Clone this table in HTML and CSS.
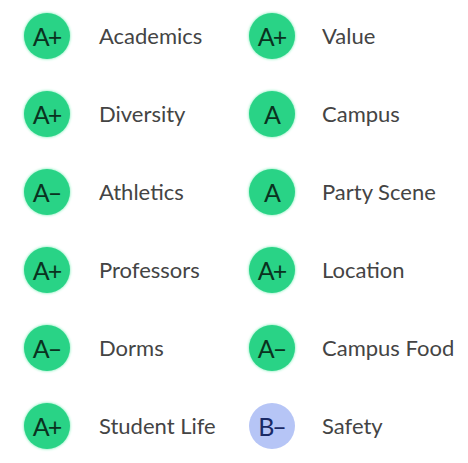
FILE: index.html
```html
<!DOCTYPE html>
<html>
<head>
<meta charset="utf-8">
<link rel="stylesheet" href="styles.css">
</head>
<body>
<div class="grades">
  <div class="item"><div class="grade green">A+</div><div class="label">Academics</div></div>
  <div class="item"><div class="grade green">A+</div><div class="label">Value</div></div>
  <div class="item"><div class="grade green">A+</div><div class="label">Diversity</div></div>
  <div class="item"><div class="grade green">A</div><div class="label">Campus</div></div>
  <div class="item"><div class="grade green">A&#8211;</div><div class="label">Athletics</div></div>
  <div class="item"><div class="grade green">A</div><div class="label">Party Scene</div></div>
  <div class="item"><div class="grade green">A+</div><div class="label">Professors</div></div>
  <div class="item"><div class="grade green">A+</div><div class="label">Location</div></div>
  <div class="item"><div class="grade green">A&#8211;</div><div class="label">Dorms</div></div>
  <div class="item"><div class="grade green">A&#8211;</div><div class="label">Campus Food</div></div>
  <div class="item"><div class="grade green">A+</div><div class="label">Student Life</div></div>
  <div class="item"><div class="grade blue">B&#8211;</div><div class="label">Safety</div></div>
</div>
</body>
</html>
```

FILE: styles.css
```css
html, body {
  margin: 0;
  padding: 0;
  background: #ffffff;
}
body {
  font-family: "Lato", "Noto Sans", sans-serif;
}
.grades {
  display: grid;
  grid-template-columns: 225px 219px;
  grid-auto-rows: 78px;
  padding: 13px 0 0 24px;
}
.item {
  display: flex;
  align-items: flex-start;
  gap: 29px;
}
.item:nth-child(even) {
  gap: 27px;
}
.grade {
  width: 46px;
  height: 46px;
  border-radius: 50%;
  display: flex;
  align-items: center;
  justify-content: center;
  font-size: 25px;
  letter-spacing: -2px;
  font-weight: 400;
  flex: none;
  padding-right: 1px;
  box-sizing: border-box;
}
.green {
  background: #29d386;
  color: #0a3220;
  box-shadow: 0 0 3px #5ee9a7;
}
.blue {
  background: #b6c5f6;
  color: #1a2a66;
}
.label {
  font-size: 22px;
  color: #444444;
  line-height: 46px;
}
```
